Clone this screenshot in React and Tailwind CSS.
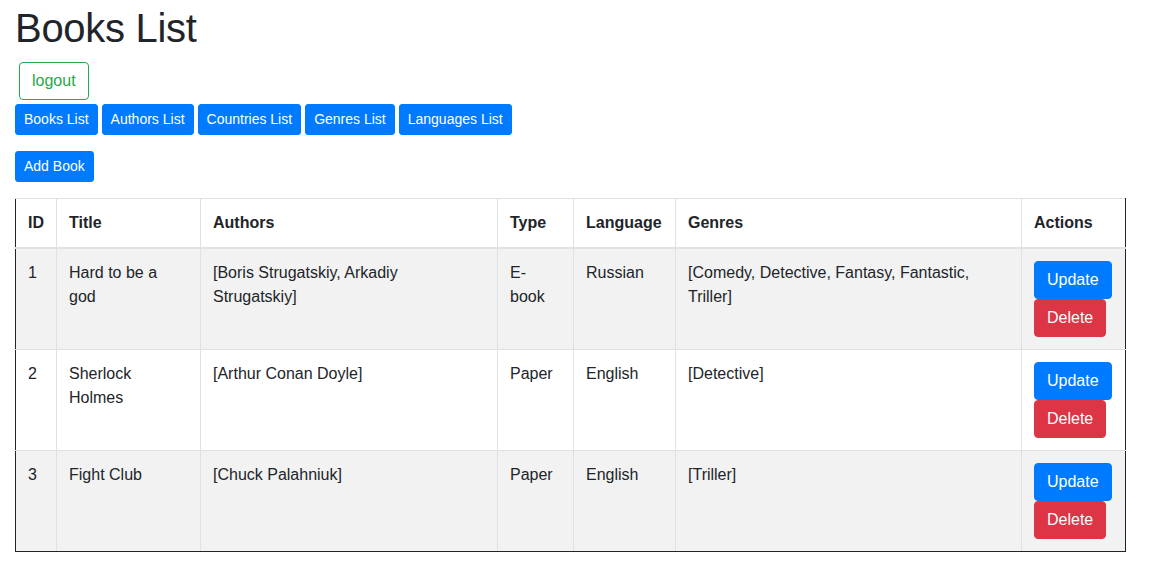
import React from 'react';

const books = [
  {
    id: 1,
    title: ['Hard to be a', 'god'],
    authors: ['[Boris Strugatskiy, Arkadiy', 'Strugatskiy]'],
    type: ['E-', 'book'],
    language: 'Russian',
    genres: ['[Comedy, Detective, Fantasy, Fantastic,', 'Triller]'],
  },
  {
    id: 2,
    title: ['Sherlock', 'Holmes'],
    authors: ['[Arthur Conan Doyle]'],
    type: ['Paper'],
    language: 'English',
    genres: ['[Detective]'],
  },
  {
    id: 3,
    title: ['Fight Club'],
    authors: ['[Chuck Palahniuk]'],
    type: ['Paper'],
    language: 'English',
    genres: ['[Triller]'],
  },
];

const navItems = ['Books List', 'Authors List', 'Countries List', 'Genres List', 'Languages List'];

// renders text with the same line breaks as the original table
const Lines = ({ lines }) => (
  <>
    {lines.map((l, i) => (
      <React.Fragment key={i}>
        {i > 0 && <br />}
        {l}
      </React.Fragment>
    ))}
  </>
);

const App = () => {
  const cell = 'border border-[#dee2e6] px-3 py-3 align-top text-left';
  const first = 'border-l-[#212529]';
  const last = 'border-r-[#212529]';

  return (
    <div className="min-h-screen bg-white px-[15px] text-[#212529] font-['Liberation_Sans',Arial,sans-serif]">
      <h1 className="pt-1 mb-[10px] text-[40px] leading-[48px] font-medium tracking-[-0.3px]">Books List</h1>

      <div className="m-1 ml-1">
        <button className="h-[38px] px-3 rounded-[4px] border border-[#28a745] text-[#28a745] text-base leading-6 bg-white">
          logout
        </button>
      </div>

      <div className="flex gap-1">
        {navItems.map((item) => (
          <button
            key={item}
            className="px-2 py-[4px] rounded-[3px] border border-[#007bff] bg-[#007bff] text-white text-sm leading-[21px]"
          >
            {item}
          </button>
        ))}
      </div>

      <div className="mt-4">
        <button className="px-2 py-[4px] rounded-[3px] border border-[#007bff] bg-[#007bff] text-white text-sm leading-[21px]">
          Add Book
        </button>
      </div>

      <table className="mt-4 w-[1110px] table-fixed border-collapse text-base leading-6">
        <colgroup>
          <col className="w-[41px]" />
          <col className="w-[144px]" />
          <col className="w-[297px]" />
          <col className="w-[76px]" />
          <col className="w-[102px]" />
          <col className="w-[346px]" />
          <col className="w-[104px]" />
        </colgroup>
        <thead>
          <tr className="bg-white">
            {['ID', 'Title', 'Authors', 'Type', 'Language', 'Genres', 'Actions'].map((h, i) => (
              <th
                key={h}
                className={`${cell} border-b-2 font-bold ${i === 0 ? first : ''} ${i === 6 ? last : ''}`}
              >
                {h}
              </th>
            ))}
          </tr>
        </thead>
        <tbody>
          {books.map((b, r) => {
            const bottom = r === books.length - 1 ? 'border-b-[#212529]' : '';
            return (
              <tr key={b.id} className={r % 2 === 0 ? 'bg-[#f2f2f2]' : 'bg-white'}>
                <td className={`${cell} ${first} ${bottom}`}>{b.id}</td>
                <td className={`${cell} ${bottom}`}><Lines lines={b.title} /></td>
                <td className={`${cell} ${bottom}`}><Lines lines={b.authors} /></td>
                <td className={`${cell} ${bottom}`}><Lines lines={b.type} /></td>
                <td className={`${cell} ${bottom}`}>{b.language}</td>
                <td className={`${cell} ${bottom}`}><Lines lines={b.genres} /></td>
                <td className={`${cell} ${last} ${bottom}`}>
                  <div className="flex flex-col items-start">
                    <button className="h-[38px] px-3 rounded-[4px] border border-[#007bff] bg-[#007bff] text-white">
                      Update
                    </button>
                    <button className="h-[38px] px-3 rounded-[4px] border border-[#dc3545] bg-[#dc3545] text-white">
                      Delete
                    </button>
                  </div>
                </td>
              </tr>
            );
          })}
        </tbody>
      </table>
    </div>
  );
};

export default App;
